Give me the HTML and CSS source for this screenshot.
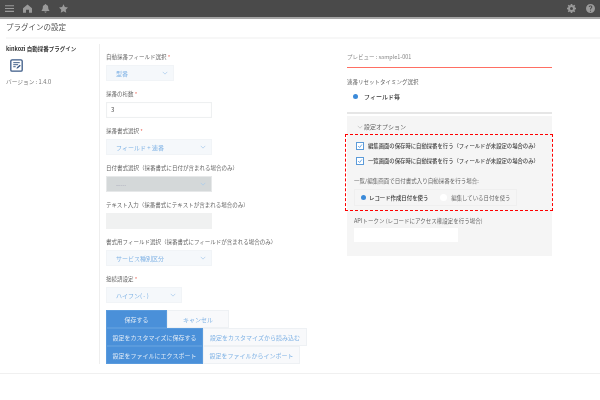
FILE: index.html
```html
<!DOCTYPE html>
<html lang="ja">
<head>
<meta charset="utf-8">
<title>プラグインの設定</title>
<link rel="stylesheet" href="styles.css">
</head>
<body>
<header class="topbar">
  <div class="topgroup">
    <svg class="ic" viewBox="0 0 12 12"><path d="M0 1.500h12v1.400H0zM0 5.300h12v1.400H0zM0 9.100h12v1.400H0z"/></svg>
    <svg class="ic" viewBox="0 0 12 12"><path d="M6 .8 12 5.500v6H8V7.500H4v4H0v-6z"/></svg>
    <svg class="ic" viewBox="0 0 12 12"><path d="M6 0a1 1 0 0 1 1 1c2 .5 2.600 2 2.600 3.600 0 2 .8 3 1.600 3.900v.8H.8v-.8c.8-.9 1.600-1.900 1.600-3.900C2.400 3 3 1.500 5 1a1 1 0 0 1 1-1zM4.500 10h3a1.500 1.500 0 0 1-3 0z"/></svg>
    <svg class="ic" viewBox="0 0 12 12"><path d="m6 .3 1.800 3.800 4.200.5-3.100 2.900.8 4.200L6 9.600l-3.700 2.100.8-4.200L0 4.600l4.200-.5z"/></svg>
  </div>
  <div class="topgroup right">
    <svg class="ic" viewBox="0 0 12 12"><path fill-rule="evenodd" d="M5 0h2l.3 1.700 1 .4L9.700 1 11 2.300 10 3.700l.4 1L12 5v2l-1.600.3-.4 1 1 1.400L9.700 11l-1.400-1-1 .4L7 12H5l-.3-1.600-1-.4-1.400 1L1 9.700l1-1.400-.4-1L0 7V5l1.600-.3.4-1L1 2.300 2.300 1l1.400 1 1-.4zM6 4a2 2 0 1 0 0 4 2 2 0 0 0 0-4z"/></svg>
    <svg class="ic" viewBox="0 0 12 12"><path fill-rule="evenodd" d="M6 0a6 6 0 1 1 0 12A6 6 0 0 1 6 0zM5.300 9v1.200h1.400V9zM6 2C4.600 2 3.700 2.800 3.600 4.100h1.300c.1-.6.500-1 1.100-1s1 .3 1 .9c0 1-1.800 1.200-1.700 3.300h1.300c0-1.500 1.800-1.700 1.800-3.400C8.400 2.800 7.400 2 6 2z"/></svg>
  </div>
</header>
<h1 class="pagetitle">プラグインの設定</h1>
<main class="content">
  <aside class="side">
    <p class="plugin-name">kinkozi 自動採番プラグイン</p>
    <svg class="plugin-icon" viewBox="0 0 16 16"><rect x="1" y="1" width="14" height="14" rx="1.500" fill="none" stroke="#3b5a86" stroke-width="1.600"/><path d="M4 4.500h8M4 7h6M4 9.500h3" stroke="#3b5a86" stroke-width="1.200" fill="none"/><path d="m8 12 .5-2 3.500-3 1.300 1.300-3.500 3.200z" fill="#3b5a86"/></svg>
    <p class="version">バージョン : 1.4.0</p>
  </aside>
  <section class="form">
    <div class="field">
      <label class="lbl">自動採番フィールド選択 <span class="req">*</span></label>
      <div class="sel w68"><span>型番</span><svg class="chev" viewBox="0 0 8 5"><path d="m1 1 3 3 3-3"/></svg></div>
    </div>
    <div class="field">
      <label class="lbl">採番の桁数 <span class="req">*</span></label>
      <div class="inp w106">3</div>
    </div>
    <div class="field">
      <label class="lbl">採番書式選択 <span class="req">*</span></label>
      <div class="sel w106"><span>フィールド + 連番</span><svg class="chev" viewBox="0 0 8 5"><path d="m1 1 3 3 3-3"/></svg></div>
    </div>
    <div class="field">
      <label class="lbl">日付書式選択（採番書式に日付が含まれる場合のみ）</label>
      <div class="sel w106 dis"><span>-----</span><svg class="chev" viewBox="0 0 8 5"><path d="m1 1 3 3 3-3"/></svg></div>
    </div>
    <div class="field">
      <label class="lbl">テキスト入力（採番書式にテキストが含まれる場合のみ）</label>
      <div class="inp w106 blank"></div>
    </div>
    <div class="field">
      <label class="lbl">書式用フィールド選択（採番書式にフィールドが含まれる場合のみ）</label>
      <div class="sel w106"><span>サービス種別区分</span><svg class="chev" viewBox="0 0 8 5"><path d="m1 1 3 3 3-3"/></svg></div>
    </div>
    <div class="field">
      <label class="lbl">接続語設定 <span class="req">*</span></label>
      <div class="sel w76"><span>ハイフン( - )</span><svg class="chev" viewBox="0 0 8 5"><path d="m1 1 3 3 3-3"/></svg></div>
    </div>
    <div class="btns">
      <div class="btnrow"><button class="btn primary b61">保存する</button><button class="btn b62">キャンセル</button></div>
      <div class="btnrow"><button class="btn primary b97">設定をカスタマイズに保存する</button><button class="btn b104">設定をカスタマイズから読み込む</button></div>
      <div class="btnrow"><button class="btn primary b97">設定をファイルにエクスポート</button><button class="btn b97">設定をファイルからインポート</button></div>
    </div>
  </section>
  <section class="right-col">
    <p class="preview">プレビュー : sample1-001</p>
    <p class="lbl reset-label">連番リセットタイミング選択</p>
    <div class="radio-line"><span class="dot on"></span><b>フィールド毎</b></div>
    <div class="panel">
      <div class="opt-title"><svg class="chev thin" viewBox="0 0 8 5"><path d="m1 1 3 3 3-3"/></svg>設定オプション</div>
      <div class="highlight">
        <div class="check"><span class="box"><svg viewBox="0 0 8 8"><path d="m1.500 4 2 2 3-4"/></svg></span>編集画面の保存時に自動採番を行う（フィールドが未設定の場合のみ）</div>
        <div class="check"><span class="box"><svg viewBox="0 0 8 8"><path d="m1.500 4 2 2 3-4"/></svg></span>一覧画面の保存時に自動採番を行う（フィールドが未設定の場合のみ）</div>
        <p class="lbl hl-label">一覧/編集画面で日付書式入り自動採番を行う場合:</p>
        <div class="radios">
          <span class="radio-item first"><span class="dot on"></span><b>レコード作成日付を使う</b></span>
          <span class="radio-item"><span class="dot"></span>編集している日付を使う</span>
        </div>
      </div>
      <p class="lbl api-label">APIトークン (レコードにアクセス権設定を行う場合)</p>
      <div class="api-input"></div>
    </div>
  </section>
</main>
<div class="endline"></div>
</body>
</html>
```
FILE: styles.css
```css
* { box-sizing: border-box; }
html, body { margin: 0; padding: 0; }
body {
  width: 600px; height: 400px; overflow: hidden; background: #fff;
  font-family: "Noto Sans CJK JP", "Noto Sans", sans-serif;
  font-size: 6px; color: #666;
  filter: blur(0.35px);
}
p { margin: 0; }
.topbar {
  height: 19px; background: #4a4a4a; border-bottom: 2px solid #a5a5a5;
  display: flex; justify-content: space-between; align-items: center; padding: 0 5px;
}
.topgroup { display: flex; gap: 9px; align-items: center; }
.topgroup.right { gap: 10px; }
.ic { width: 9px; height: 9px; fill: #9a9a9a; display: block; }
.pagetitle {
  margin: 0 0 0 6px; height: 20px; line-height: 15px; font-size: 7.500px; font-weight: 400; color: #555;
  border-bottom: 2px solid #f7f7f7;
}
.content { display: flex; margin-top: 5px; }
.side { width: 94px; margin-left: 6px; border-right: 1px solid #eee; padding-top: 1px; height: 320px; flex: none; }
.plugin-name { font-size: 5.500px; line-height: 8px; color: #333; font-weight: 700; white-space: nowrap; }
.plugin-icon { width: 13px; height: 13px; display: block; margin: 6px 0 0 4px; }
.version { font-size: 5.700px; line-height: 8px; margin-top: 6px; color: #777; }
.form { width: 247px; flex: none; padding: 9px 0 0 6px; }
.field { height: 37px; }
.lbl { display: block; font-size: 5.500px; line-height: 8px; color: #666; margin-bottom: 4px; height: 8px; white-space: nowrap; }
.req { color: #e74c3c; }
.sel {
  height: 16px; background: #f5f8fb; border: 1px solid #f1f4f7; color: #7fb2e5;
  display: flex; align-items: center; justify-content: space-between; padding: 0 5px 0 9px;
}
.chev { width: 6px; height: 4px; fill: none; stroke: #a9cbec; stroke-width: 1; flex: none; }
.dis { background: #d4d8d9; border-color: #e6e8e9; color: #aab; }
.w68 { width: 68px; }
.w76 { width: 76px; }
.w106 { width: 106px; }
.inp { height: 16px; background: #fff; border: 1px solid #eef0f1; box-shadow: inset 0 0 1px #eee; padding: 0 4px; line-height: 14px; color: #444; }
.blank { background: #f0f1f1; border-color: #f0f1f1; }
.btns { margin-top: -2px; }
.btnrow { display: flex; height: 18px; }
.btn { height: 18px; padding: 0; border: 1px solid #eef1f4; background: #f8f9fb; color: #7fb2e5; font: inherit; font-size: 6px; white-space: nowrap; }
.primary { background: #4a90d9; color: #dfeaf6; border-color: #5a9bdd; }
.b61 { width: 61px; }
.b62 { width: 62px; }
.b97 { width: 97px; }
.b104 { width: 104px; }
.right-col { width: 205px; flex: none; padding-top: 9px; }
.preview { font-size: 5.500px; line-height: 8px; height: 15px; color: #888; border-bottom: 1px solid #ff6f63; padding-bottom: 3px; }
.reset-label { margin-top: 10px; margin-bottom: 0; }
.radio-line { display: flex; align-items: center; height: 10px; margin-top: 5px; padding-left: 5px; gap: 5px; color: #333; }
.radio-line b { font-weight: 500; }
.dot { width: 7px; height: 7px; border-radius: 50%; background: #fff; flex: none; display: block; }
.dot.on { background: #3b8ad9; width: 5px; height: 5px; margin: 0 1px; }
.panel { margin-top: 11px; border-top: 2px solid #e6e6e6; background: #f5f5f5; height: 144px; position: relative; padding-top: 2px; }
.panel::before { content: ""; position: absolute; left: 0; right: 0; top: 0; height: 2px; background: #fff; }
.opt-title { height: 14px; padding-left: 10px; font-size: 6px; line-height: 14px; margin-top: 4px; color: #666; display: flex; align-items: center; gap: 1px; }
.thin { stroke: #aaa; stroke-width: .7; }
.highlight { border: 1px dashed #f00; height: 77px; width: 208px; padding: 3px 0 0 8px; margin-left: -2px; }
.check { display: flex; align-items: center; height: 15px; padding-left: 2px; gap: 4px; font-size: 5.350px; font-weight: 500; color: #444; white-space: nowrap; }
.box { width: 8px; height: 8px; border: 1px solid #5b9bd9; background: #fff; display: block; flex: none; }
.box svg { display: block; width: 6px; height: 6px; fill: none; stroke: #3b8ad9; stroke-width: 1; }
.hl-label { margin: 9px 0 4px; }
.radios { width: 163px; height: 17px; border: 1px solid #efefef; display: flex; align-items: center; padding-left: 5px; gap: 12px; color: #666; white-space: nowrap; font-size: 5.400px; }
.radio-item { display: flex; align-items: center; gap: 4px; }
.radio-item.first { gap: 2px; }
.radio-item b { font-weight: 500; color: #333; }
.api-label { margin: 6px 0 3px 7px; }
.api-input { width: 104px; height: 14px; background: #fff; margin-left: 7px; }
.endline { position: absolute; left: 0; right: 0; top: 373px; height: 1px; background: #f0f0f0; }
```
